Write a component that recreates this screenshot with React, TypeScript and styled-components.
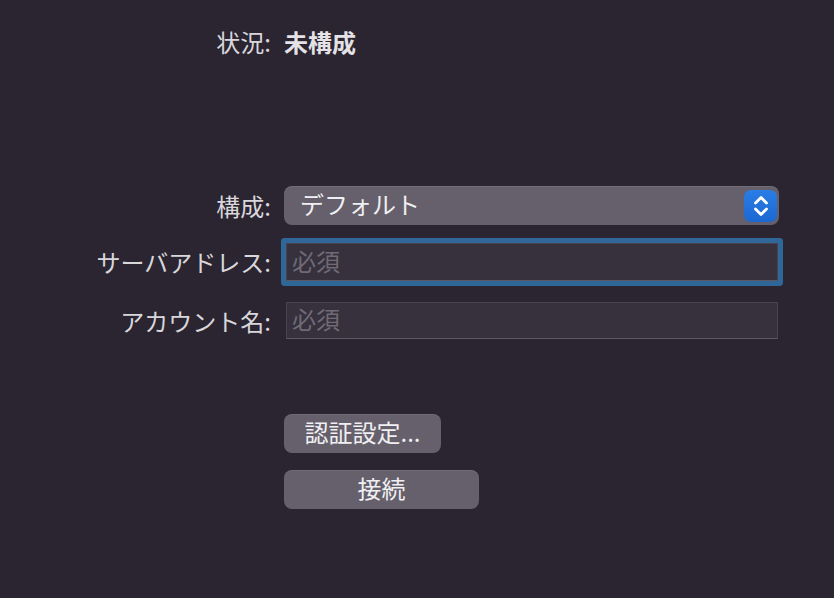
import styled, { createGlobalStyle } from 'styled-components';

const GlobalStyle = createGlobalStyle`
    html, body {
        margin: 0;
        padding: 0;
        background: #2a2530;
    }
    body {
        font-family: "Noto Sans CJK JP", "Noto Sans", sans-serif;
    }
`;

const Page = styled.div`
    width: 834px;
    height: 598px;
    padding-top: 27px;
    box-sizing: border-box;
    background: #2a2530;
    color: #dcdadf;
`;

const Row = styled.div<{ $top: number; $height: number }>`
    display: grid;
    grid-template-columns: 271px 495px;
    column-gap: 13px;
    align-items: center;
    margin-top: ${(p) => p.$top}px;
    height: ${(p) => p.$height}px;
`;

const Label = styled.div`
    text-align: right;
    font-size: 24px;
    line-height: 30px;
    color: #d9d7dc;
    white-space: nowrap;
`;

const Status = styled.div`
    font-size: 24px;
    line-height: 30px;
    font-weight: 700;
    color: #e4e2e7;
`;

const Popup = styled.div`
    display: flex;
    align-items: center;
    justify-content: space-between;
    height: 39px;
    padding: 0 2px 0 16px;
    box-sizing: border-box;
    border-radius: 8px;
    background: #65606b;
    box-shadow: inset 0 1px 0 rgba(255, 255, 255, 0.08);
    font-size: 24px;
    line-height: 30px;
    color: #f0eff2;
`;

const PopupText = styled.span`
    padding-bottom: 4px;
`;

const Stepper = styled.div`
    width: 33px;
    height: 32px;
    border-radius: 7px;
    background: linear-gradient(#2a7de6, #1b68d2);
    display: flex;
    align-items: center;
    justify-content: center;
`;

const Field = styled.div<{ $focused?: boolean }>`
    margin-left: 2px;
    width: 492px;
    height: ${(p) => (p.$focused ? 38 : 37)}px;
    box-sizing: border-box;
    padding: 0 0 3px 5px;
    display: flex;
    align-items: center;
    background: #36313d;
    border: 1px solid #48434e;
    border-bottom-color: #5d5863;
    font-size: 24px;
    line-height: 30px;
    color: #6f6a75;
    box-shadow: ${(p) => (p.$focused ? '0 0 0 5px #2f6898' : 'none')};
    border-radius: ${(p) => (p.$focused ? '1px' : '0')};
`;

const Button = styled.div<{ $top: number; $width: number }>`
    margin-left: 284px;
    margin-top: ${(p) => p.$top}px;
    width: ${(p) => p.$width}px;
    height: 39px;
    box-sizing: border-box;
    padding-bottom: 3px;
    border-radius: 8px;
    background: #65606b;
    box-shadow: inset 0 1px 0 rgba(255, 255, 255, 0.08);
    display: flex;
    align-items: center;
    justify-content: center;
    font-size: 24px;
    line-height: 30px;
    color: #f0eff2;
`;

function StepperIcon() {
    return (
        <Stepper>
            <svg width="20" height="26" viewBox="0 0 20 26" fill="none">
                <path d="M4.5 10 L10 4.5 L15.5 10" stroke="#fff" strokeWidth="2.8" strokeLinecap="round" strokeLinejoin="round" />
                <path d="M4.5 16 L10 21.5 L15.5 16" stroke="#fff" strokeWidth="2.8" strokeLinecap="round" strokeLinejoin="round" />
            </svg>
        </Stepper>
    );
}

export default function App() {
    return (
        <>
            <GlobalStyle />
            <Page>
                <Row $top={0} $height={30}>
                    <Label>状況:</Label>
                    <Status>未構成</Status>
                </Row>
                <Row $top={129} $height={39}>
                    <Label>構成:</Label>
                    <Popup>
                        <PopupText>デフォルト</PopupText>
                        <StepperIcon />
                    </Popup>
                </Row>
                <Row $top={18} $height={38}>
                    <Label>サーバアドレス:</Label>
                    <Field $focused>必須</Field>
                </Row>
                <Row $top={21} $height={37}>
                    <Label>アカウント名:</Label>
                    <Field>必須</Field>
                </Row>
                <Button $top={75} $width={157}>認証設定...</Button>
                <Button $top={17} $width={195}>接続</Button>
            </Page>
        </>
    );
}
